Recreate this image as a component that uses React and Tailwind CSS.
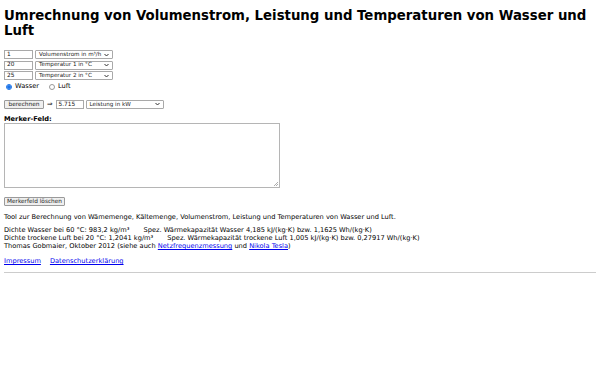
import React from "react";

const Sel = ({ w, label }) => (
  <div className={`flex items-center justify-between h-[9px] border border-[#a9a9a9] bg-white rounded-[1px] pl-[3px] pr-[3px] ${w}`}>
    <span className="text-[5.6px] leading-none text-[#222] whitespace-nowrap">{label}</span>
    <svg width="5" height="4" viewBox="0 0 5 4"><path d="M0.5 1 L2.5 3 L4.5 1" fill="none" stroke="#333" strokeWidth="1" /></svg>
  </div>
);

const Inp = ({ w, v }) => (
  <div className={`flex items-center h-[9px] border border-[#a9a9a9] bg-white pl-[2px] ${w}`}>
    <span className="text-[5.8px] leading-none text-[#111]">{v}</span>
  </div>
);

const Btn = ({ w, label }) => (
  <div className={`flex items-center justify-center h-[9px] border border-[#9a9a9a] bg-[#efefef] rounded-[1px] ${w}`}>
    <span className="text-[5.8px] leading-none text-[#222] whitespace-nowrap">{label}</span>
  </div>
);

export default function App() {
  return (
    <div className="w-[600px] h-[375px] bg-white text-black px-[4px] pt-[9px]" style={{ fontFamily: '"DejaVu Sans", sans-serif' }}>
      <h1 className="text-[13.3px] font-bold leading-[14.5px]">
        Umrechnung von Volumenstrom, Leistung und Temperaturen von Wasser und Luft
      </h1>
      <div className="mt-[12px] flex flex-col gap-[1.5px]">
        <div className="flex gap-[2px]"><Inp w="w-[29px]" v="1" /><Sel w="w-[78px]" label="Volumenstrom in m³/h" /></div>
        <div className="flex gap-[2px]"><Inp w="w-[29px]" v="20" /><Sel w="w-[78px]" label="Temperatur 1 in °C" /></div>
        <div className="flex gap-[2px]"><Inp w="w-[29px]" v="25" /><Sel w="w-[78px]" label="Temperatur 2 in °C" /></div>
        <div className="flex items-center h-[10px] text-[6.65px] pl-[2px]">
          <span className="w-[6px] h-[6px] rounded-full border border-[#1a73e8] flex items-center justify-center"><span className="w-[4px] h-[4px] rounded-full bg-[#1a73e8]" /></span>
          <span className="ml-[3px]">Wasser</span>
          <span className="ml-[10px] w-[6px] h-[6px] rounded-full border border-[#999]" />
          <span className="ml-[3px]">Luft</span>
        </div>
      </div>
      <div className="mt-[8px] flex items-center">
        <Btn w="w-[40px]" label="berechnen" />
        <span className="text-[6.65px] mx-[3px]">⇒</span>
        <Inp w="w-[28px]" v="5.715" />
        <div className="ml-[2px]"><Sel w="w-[78px]" label="Leistung in kW" /></div>
      </div>
      <div className="mt-[6px] text-[6.65px] font-bold leading-[8px]">Merker-Feld:</div>
      <div className="relative w-[276px] h-[65px] border border-[#b5b5b5] bg-white">
        <svg className="absolute right-[1px] bottom-[1px]" width="5" height="5" viewBox="0 0 5 5"><path d="M1 5 L5 1 M3 5 L5 3" stroke="#999" strokeWidth="0.8" /></svg>
      </div>
      <div className="mt-[9px]"><Btn w="w-[61px]" label="Merkerfeld löschen" /></div>
      <p className="mt-[7px] text-[6.65px] leading-[8px]">Tool zur Berechnung von Wämemenge, Kältemenge, Volumenstrom, Leistung und Temperaturen von Wasser und Luft.</p>
      <div className="mt-[5px] text-[6.65px] leading-[8px]">
        <div>Dichte Wasser bei 60 °C: 983,2 kg/m³ <span className="ml-[12px]">Spez. Wärmekapazität Wasser 4,185 kJ/(kg·K) bzw. 1,1625 Wh/(kg·K)</span></div>
        <div>Dichte trockene Luft bei 20 °C: 1,2041 kg/m³ <span className="ml-[12px]">Spez. Wärmekapazität trockene Luft 1,005 kJ/(kg·K) bzw. 0,27917 Wh/(kg·K)</span></div>
        <div>Thomas Gobmaier, Oktober 2012 (siehe auch <a className="text-[#0000ee] underline">Netzfrequenzmessung</a> und <a className="text-[#0000ee] underline">Nikola Tesla</a>)</div>
      </div>
      <div className="mt-[7px] text-[6.65px] leading-[8px]">
        <a className="text-[#0000ee] underline">Impressum</a>
        <a className="ml-[9px] text-[#0000ee] underline">Datenschutzerklärung</a>
      </div>
      <hr className="mt-[7px] border-t border-[#ccc]" />
    </div>
  );
}
